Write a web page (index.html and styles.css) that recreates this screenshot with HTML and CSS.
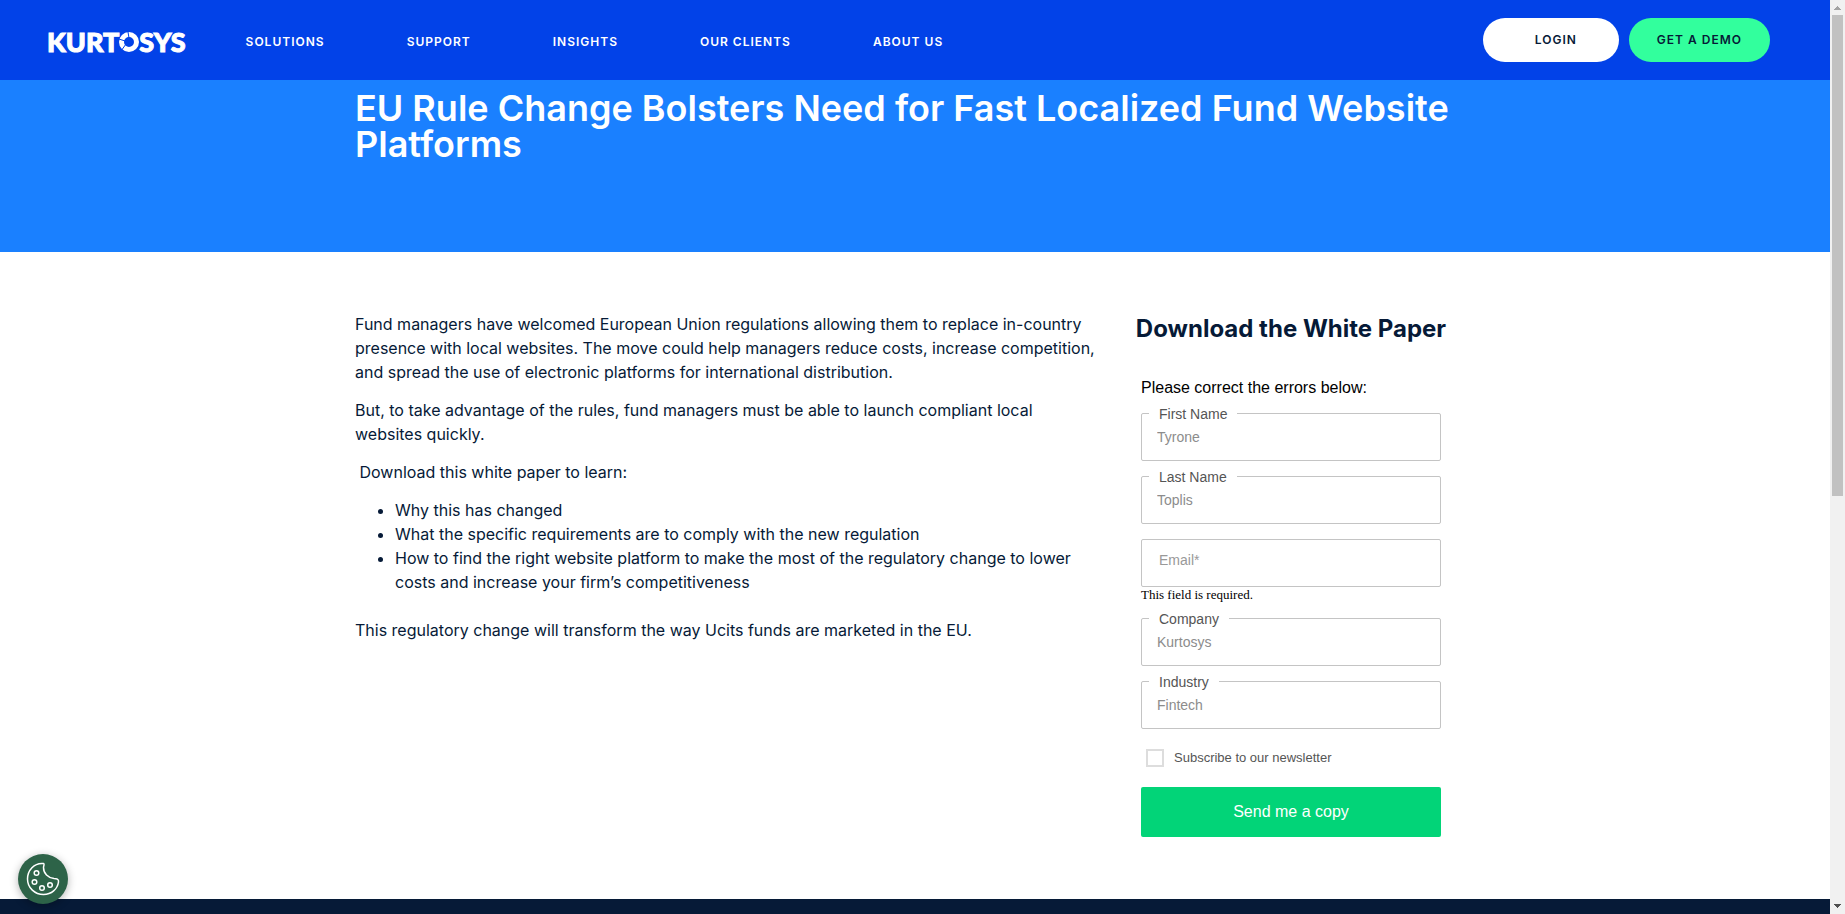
FILE: index.html
```html
<!DOCTYPE html>
<html lang="en">
<head>
<meta charset="utf-8">
<title>EU Rule Change Bolsters Need for Fast Localized Fund Website Platforms</title>
<link rel="stylesheet" href="styles.css">
</head>
<body>
<div class="window">
  <div class="page">
    <header class="site-header">
      <a class="logo" href="#" aria-label="Kurtosys">
        <span>KURT</span>
        <svg class="logo-ring" viewBox="0 0 20 20" aria-hidden="true">
          <circle class="ring" cx="10" cy="10" r="7.500"/>
          <path class="cut" d="M9 0 10 6M0 7 6 9M2 19 7 12"/>
        </svg>
        <span>SYS</span>
      </a>
      <nav class="nav">
        <a href="#">SOLUTIONS</a>
        <a href="#">SUPPORT</a>
        <a href="#">INSIGHTS</a>
        <a href="#">OUR CLIENTS</a>
        <a href="#">ABOUT US</a>
      </nav>
      <div class="actions">
        <a class="pill pill-login" href="#">LOGIN</a>
        <a class="pill pill-demo" href="#">GET A DEMO</a>
      </div>
    </header>

    <section class="hero">
      <h1 class="container">EU Rule Change Bolsters Need for Fast Localized Fund Website Platforms</h1>
    </section>

    <main class="container content">
      <article class="copy">
        <p>Fund managers have welcomed European Union regulations allowing them to replace in-country presence with local websites. The move could help managers reduce costs, increase competition, and spread the use of electronic platforms for international distribution.</p>
        <p>But, to take advantage of the rules, fund managers must be able to launch compliant local websites quickly.</p>
        <p>&nbsp;Download this white paper to learn:</p>
        <ul>
          <li>Why this has changed</li>
          <li>What the specific requirements are to comply with the new regulation</li>
          <li>How to find the right website platform to make the most of the regulatory change to lower costs and increase your firm’s competitiveness</li>
        </ul>
        <p>This regulatory change will transform the way Ucits funds are marketed in the EU.</p>
      </article>

      <aside class="download">
        <h2>Download the White Paper</h2>
        <form class="form">
          <p class="form-errors">Please correct the errors below:</p>
          <div class="field">
            <label for="first">First Name</label>
            <input id="first" type="text" value="Tyrone">
          </div>
          <div class="field">
            <label for="last">Last Name</label>
            <input id="last" type="text" value="Toplis">
          </div>
          <div class="field field-empty">
            <input id="email" type="email" placeholder="Email*" aria-label="Email">
            <p class="field-error">This field is required.</p>
          </div>
          <div class="field">
            <label for="company">Company</label>
            <input id="company" type="text" value="Kurtosys">
          </div>
          <div class="field">
            <label for="industry">Industry</label>
            <input id="industry" type="text" value="Fintech">
          </div>
          <label class="check"><input type="checkbox"><span>Subscribe to our newsletter</span></label>
          <button class="submit" type="submit">Send me a copy</button>
        </form>
      </aside>
    </main>

    <footer class="footer"></footer>

    <button class="cookie" type="button" aria-label="Cookie settings">
      <svg viewBox="0 0 50 50" aria-hidden="true">
        <path d="M25.500 9.500C16 8.500 9.500 16.500 9.500 25C9.500 34 17 40.500 25.500 40.500C33.500 40.500 39.500 35 40.500 28C41 25 38.500 24.500 36 24.500C30 24 25.500 19.500 25.500 13.500C25.500 11.500 27 10 25.500 9.500Z"/>
        <circle cx="18.500" cy="19" r="2.300"/>
        <circle cx="16.500" cy="28" r="2.300"/>
        <circle cx="24" cy="34" r="2.300"/>
        <circle cx="32" cy="31" r="2.300"/>
      </svg>
    </button>
  </div>

  <div class="scrollbar" aria-hidden="true">
    <svg class="arrow arrow-up" viewBox="0 0 15 15"><path d="M7 6h1v1h1v1h1v1h1v1H4V9h1V8h1V7h1z"/></svg>
    <div class="thumb"></div>
    <svg class="arrow arrow-down" viewBox="0 0 15 15"><path d="M4 5h7v1h-1v1H9v1H8v1H7V8H6V7H5V6H4z"/></svg>
  </div>
</div>
</body>
</html>
```
FILE: styles.css
```css
* {
  box-sizing: border-box;
}

body {
  margin: 0;
  color: #061a37;
  background: #fff;
  font-family: Inter, "Noto Sans", sans-serif;
  font-size: 16px;
  line-height: 24px;
}

h1, h2, p, ul {
  margin: 0;
}

a {
  color: inherit;
  text-decoration: none;
}

.window {
  display: flex;
  height: 100vh;
  overflow: hidden;
}

.page {
  flex: 1;
  min-width: 0;
  display: flex;
  flex-direction: column;
}

.container {
  width: 100%;
  max-width: 1120px;
  margin: 0 auto;
}

.site-header {
  display: flex;
  align-items: center;
  flex: none;
  height: 80px;
  padding: 0 60px 0 47px;
  color: #fff;
  background: #0242e8;
}

.logo {
  display: flex;
  align-items: center;
  padding-top: 4px;
  font: 900 27px/24px Lato, sans-serif;
  -webkit-text-stroke: 1px #fff;
}

.logo-ring {
  width: 20px;
  height: 20px;
}

.ring {
  fill: none;
  stroke: #fff;
  stroke-width: 5;
}

.cut {
  fill: none;
  stroke: #0242e8;
  stroke-width: 1;
}

.nav {
  display: flex;
  gap: 82px;
  margin-left: 60px;
  padding-top: 4px;
}

.nav a,
.pill {
  font-size: 12px;
  font-weight: 600;
  letter-spacing: 1px;
}

.actions {
  display: flex;
  gap: 10px;
  margin-left: auto;
}

.pill {
  padding: 10px 28px;
  border-radius: 22px;
  color: #061a37;
}

.pill-login {
  padding: 10px 42px 10px 52px;
  background: #fff;
}

.pill-demo {
  background: #32ff9d;
}

.hero {
  flex: none;
  min-height: 172px;
  padding-top: 10px;
  background: #1a80ff;
}

.hero h1 {
  color: #fff;
  font-size: 36px;
  line-height: 36px;
  font-weight: 600;
}

.content {
  flex: none;
  display: grid;
  grid-template-columns: minmax(0, 1fr) 368px;
  padding: 60px 0 62px;
}

.copy {
  padding-right: 8px;
}

.copy p {
  margin-bottom: 14px;
}

.copy ul {
  margin-bottom: 24px;
  padding-left: 40px;
}

.download h2 {
  margin-bottom: 32px;
  font-size: 24px;
  line-height: 34px;
  font-weight: 700;
  text-align: center;
}

.form {
  display: flex;
  flex-direction: column;
  gap: 15px;
  width: 300px;
  margin: 0 auto;
  font-family: "Liberation Sans", Arial, sans-serif;
}

.form-errors {
  color: #000;
  line-height: 20px;
}

.field {
  position: relative;
}

.field label {
  position: absolute;
  top: -8px;
  left: 8px;
  padding: 0 10px;
  color: #555;
  background: #fff;
  font-size: 14px;
  line-height: 18px;
}

.field input {
  display: block;
  width: 100%;
  height: 48px;
  padding: 0 15px;
  border: 1px solid #c4c4c4;
  border-radius: 2px;
  color: #8c8c8c;
  background: #fff;
  font: 14px/16px "Liberation Sans", Arial, sans-serif;
}

.field-empty input {
  padding: 0 17px 6px;
}

.field-empty input::placeholder {
  color: #999;
}

.field-error {
  color: #000;
  font: 13px/16px "Liberation Serif", serif;
}

.check {
  display: flex;
  align-items: center;
  gap: 10px;
  margin: 5px 0;
  padding-left: 5px;
  color: #555;
  font-size: 13px;
  line-height: 18px;
}

.check input {
  appearance: none;
  width: 18px;
  height: 18px;
  margin: 0;
  border: 2px solid #ddd;
  background: #fff;
}

.submit {
  height: 50px;
  border: 0;
  border-radius: 2px;
  color: #fff;
  background: #02d478;
  font: 16px/20px "Liberation Sans", Arial, sans-serif;
}

.footer {
  flex: 1 0 15px;
  background: #061a37;
}

.cookie {
  position: fixed;
  left: 18px;
  bottom: 10px;
  width: 50px;
  height: 50px;
  padding: 0;
  border: 0;
  border-radius: 50%;
  background: #2d6348;
  box-shadow: 0 2px 8px rgba(0, 0, 0, 0.3);
}

.cookie svg {
  display: block;
  fill: none;
  stroke: #fff;
  stroke-width: 1.5;
}

.scrollbar {
  flex: none;
  display: flex;
  flex-direction: column;
  width: 15px;
  background: #f1f1f1;
}

.thumb {
  width: 11px;
  height: 52.6%;
  margin: 0 auto;
  background: #c1c1c1;
}

.arrow {
  flex: none;
  width: 15px;
  height: 15px;
}

.arrow-up {
  fill: #a3a3a3;
}

.arrow-down {
  margin-top: auto;
  fill: #505050;
}
```
